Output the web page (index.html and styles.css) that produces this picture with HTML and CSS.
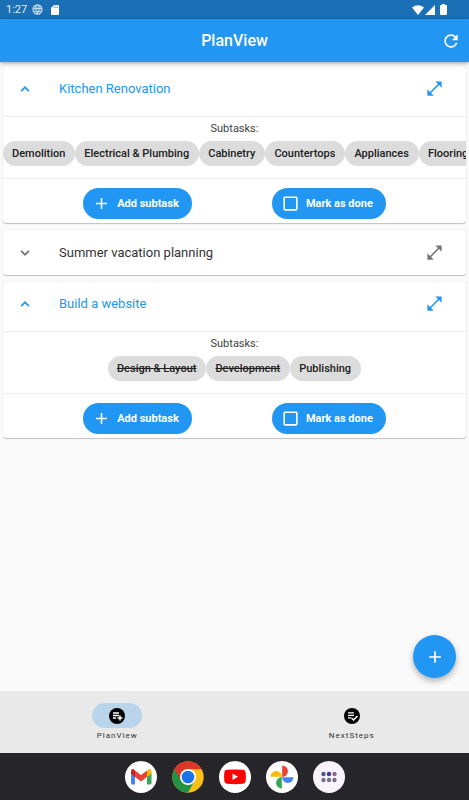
FILE: index.html
```html
<!DOCTYPE html>
<html lang="en">
<head>
<meta charset="utf-8">
<meta name="viewport" content="width=device-width, initial-scale=1">
<title>PlanView</title>
<link rel="stylesheet" href="styles.css">
</head>
<body>
<svg class="defs" aria-hidden="true">
  <symbol id="up" viewBox="0 0 24 24"><path d="M12 8l-6 6 1.600 1.600L12 11.200l4.400 4.400L18 14z"/></symbol>
  <symbol id="down" viewBox="0 0 24 24"><path d="M16.400 8.400L12 12.800 7.600 8.400 6 10l6 6 6-6z"/></symbol>
  <symbol id="expand" viewBox="0 0 24 24"><path d="M21 11V3h-8l3.290 3.290-10 10L3 13v8h8l-3.290-3.290 10-10z"/></symbol>
  <symbol id="plus" viewBox="0 0 24 24"><path d="M19 13h-6v6h-2v-6H5v-2h6V5h2v6h6z"/></symbol>
  <symbol id="box" viewBox="0 0 24 24"><path d="M19 5v14H5V5h14m0-2H5c-1.100 0-2 .9-2 2v14c0 1.100.9 2 2 2h14c1.100 0 2-.9 2-2V5c0-1.100-.9-2-2-2z"/></symbol>
</svg>
<div class="status">
  <span>1:27</span>
  <svg class="status-left" width="11" height="11" viewBox="0 0 11 11"><circle cx="5.500" cy="5.500" r="4.500" fill="#a5c8e5" fill-opacity=".35" stroke="#c3dbef" stroke-width="1.300"/><path d="M1 4.500h9M2.500 7.500h6M4 1.500v5M7 1.500v5M5.500 7v3" stroke="#c3dbef" stroke-width="1" fill="none"/></svg>
  <svg width="8" height="10" viewBox="0 0 8 10"><path fill="#fff" d="M3 0h4q1 0 1 1v8q0 1-1 1H1q-1 0-1-1V3z"/><path d="M3.500 1.500v1.500M5 1.500v1.500M6.500 1.500v1.500" stroke="#1a6fb5" stroke-width=".6"/></svg>
  <svg class="status-right" width="12" height="10" viewBox="0 0 12 10"><path fill="#fff" d="M0 2.500Q6-2 12 2.500L6 10z"/></svg>
  <svg class="signal" width="10" height="10" viewBox="0 0 10 10"><path fill="#fff" d="M10 0v10H0z"/></svg>
  <svg class="battery" width="7" height="11" viewBox="0 0 7 11"><path fill="#fff" d="M2 0h3v1h1q1 0 1 1v8q0 1-1 1H1q-1 0-1-1V2q0-1 1-1h1z"/></svg>
</div>
<header class="appbar">
  <h1>PlanView</h1>
  <button class="icon-btn refresh" aria-label="Refresh"><svg width="20" height="20" viewBox="0 0 24 24"><path d="M17.650 6.350C16.200 4.900 14.210 4 12 4c-4.420 0-7.990 3.580-7.990 8s3.570 8 7.990 8c3.730 0 6.840-2.550 7.730-6h-2.080c-.82 2.330-3.040 4-5.650 4-3.310 0-6-2.690-6-6s2.690-6 6-6c1.660 0 3.140.69 4.220 1.780L13 11h7V4z"/></svg></button>
</header>
<main>
  <section class="card open">
    <div class="head">
      <button class="icon-btn" aria-label="Collapse"><svg width="18" height="18"><use href="#up"/></svg></button>
      <h2>Kitchen Renovation</h2>
      <button class="icon-btn" aria-label="Expand"><svg width="19" height="19"><use href="#expand"/></svg></button>
    </div>
    <div class="body">
      <p>Subtasks:</p>
      <ul class="chips scroll"><li>Demolition</li><li>Electrical &amp; Plumbing</li><li>Cabinetry</li><li>Countertops</li><li>Appliances</li><li>Flooring</li></ul>
    </div>
    <div class="actions">
      <button class="pill"><svg width="19" height="19"><use href="#plus"/></svg>Add subtask</button>
      <button class="pill"><svg width="19" height="19"><use href="#box"/></svg>Mark as done</button>
    </div>
  </section>
  <section class="card">
    <div class="head">
      <button class="icon-btn" aria-label="Open"><svg width="18" height="18"><use href="#down"/></svg></button>
      <h2>Summer vacation planning</h2>
      <button class="icon-btn" aria-label="Expand"><svg width="19" height="19"><use href="#expand"/></svg></button>
    </div>
  </section>
  <section class="card open">
    <div class="head">
      <button class="icon-btn" aria-label="Collapse"><svg width="18" height="18"><use href="#up"/></svg></button>
      <h2>Build a website</h2>
      <button class="icon-btn" aria-label="Expand"><svg width="19" height="19"><use href="#expand"/></svg></button>
    </div>
    <div class="body">
      <p>Subtasks:</p>
      <ul class="chips"><li class="done">Design &amp; Layout</li><li class="done">Development</li><li>Publishing</li></ul>
    </div>
    <div class="actions">
      <button class="pill"><svg width="19" height="19"><use href="#plus"/></svg>Add subtask</button>
      <button class="pill"><svg width="19" height="19"><use href="#box"/></svg>Mark as done</button>
    </div>
  </section>
</main>
<div class="bottom">
  <button class="fab" aria-label="Add plan"><svg width="20" height="20"><use href="#plus"/></svg></button>
  <nav class="tabs">
    <a href="#plan" class="active"><span class="tab-icon"><svg width="16" height="16" viewBox="0 0 16 16"><circle cx="8" cy="8" r="8"/><path d="M4 5h6M4 7.500h6M4 10h3" stroke="#fff" stroke-width="1.300"/><path d="M11 7.500v5M8.500 10h5" stroke="#fff" stroke-width="1.500"/></svg></span>PlanView</a>
    <a href="#next"><span class="tab-icon"><svg width="16" height="16" viewBox="0 0 16 16"><circle cx="8" cy="8" r="8"/><path d="M4 4.800h6M4 7.300h6M4 9.800h3" stroke="#fff" stroke-width="1.300"/><path d="M7.500 10l2 2 4-4" stroke="#fff" stroke-width="1.500" fill="none"/></svg></span>NextSteps</a>
  </nav>
  <div class="dock">
    <a href="#gmail" aria-label="Gmail"><svg viewBox="0 0 32 32"><circle cx="16" cy="16" r="16" fill="#fff"/><path fill="#4285f4" d="M6 11l4 3v9.500H7.500Q6 23.500 6 22z"/><path fill="#34a853" d="M22 14l4.500-3v11q0 1.500-1.500 1.500h-3z"/><path fill="#fbbc04" d="M22 9.500Q26.500 6 26.500 11v1.500L22 16z"/><path fill="#c5221f" d="M6 12.500V11q0-5 4-1.500V16z"/><path fill="#ea4335" d="M10 9.500l6 4.500 6-4.500V16l-6 4.500L10 16z"/></svg></a>
    <a href="#chrome" aria-label="Chrome"><svg viewBox="0 0 32 32"><circle cx="16" cy="16" r="15.700" fill="#fbc116"/><path fill="#229342" d="M2.400 8.150A15.700 15.700 0 0 0 16 31.700L22.500 20 16 16z"/><path fill="#dc3529" d="M2.400 8.150A15.700 15.700 0 0 1 29.600 8.150H16v7.850L9.500 20z"/><circle cx="16" cy="16" r="8" fill="#fff"/><circle cx="16" cy="16" r="6.300" fill="#1a73e8"/></svg></a>
    <a href="#youtube" aria-label="YouTube"><svg viewBox="0 0 32 32"><circle cx="16" cy="16" r="16" fill="#fff"/><path fill="#f00" d="M8 8.800q8-.8 16 0 2.500.2 2.700 3 .4 4 0 8-.2 2.800-2.700 3-8 .8-16 0-2.500-.2-2.700-3-.4-4 0-8 .2-2.800 2.700-3z"/><path fill="#fff" d="M13.500 12.500v6.500l5.500-3.200z"/></svg></a>
    <a href="#photos" aria-label="Photos"><svg viewBox="0 0 32 32"><circle cx="16" cy="16" r="16" fill="#fff"/><path fill="#ea4335" d="M16.200 4.500a5.700 5.700 0 0 1 0 11.400z"/><path fill="#4285f4" d="M27.500 16.200a5.700 5.700 0 0 1-11.400 0z"/><path fill="#34a853" d="M15.800 27.500a5.700 5.700 0 0 1 0-11.400z"/><path fill="#fbbc04" d="M4.500 15.800a5.700 5.700 0 0 1 11.400 0z"/></svg></a>
    <a href="#apps" aria-label="All apps"><svg viewBox="0 0 32 32"><circle cx="16" cy="16" r="16" fill="#f8f3fc"/><g fill="#777089"><circle cx="10.500" cy="19" r="2.200"/><circle cx="16" cy="19" r="2.200"/><circle cx="21.500" cy="19" r="2.200"/></g><circle cx="10.500" cy="13" r="2.200" fill="#55549a"/><circle cx="16" cy="13" r="2.200" fill="#3d3b93"/><circle cx="21.500" cy="13" r="2.200" fill="#94688b"/></svg></a>
  </div>
</div>
</body>
</html>
```
FILE: styles.css
```css
* { box-sizing: border-box; }
body {
  margin: 0;
  min-height: 100vh;
  display: flex;
  flex-direction: column;
  background: #fafafa;
  color: #212121;
  font-family: Roboto, "Liberation Sans", sans-serif;
}
h1, h2, p, ul { margin: 0; padding: 0; }
button { font: inherit; border: 0; padding: 0; background: none; color: inherit; }
svg { display: block; fill: currentColor; flex: none; }
a { color: inherit; text-decoration: none; }
.defs { display: none; }

.status {
  height: 19px;
  display: flex;
  align-items: center;
  padding: 0 22px 0 6px;
  background: #1a6fb5;
  color: #e3eef7;
  font-size: 11px;
}
.status-left { margin: 0 8px 0 5px; }
.status-right { margin-left: auto; }
.signal { margin-left: 1px; }
.battery { margin-left: 5px; }

.appbar {
  position: relative;
  height: 43px;
  display: grid;
  grid-template-columns: 1fr auto 1fr;
  align-items: center;
  padding: 0 8px;
  background: #2196f3;
  color: #fff;
  box-shadow: 0 1px 4px rgba(0, 0, 0, .4);
}
.appbar h1 { grid-column: 2; font-size: 16px; font-weight: 500; line-height: 22px; }
.refresh { justify-self: end; }

main {
  flex: 1;
  display: flex;
  flex-direction: column;
  gap: 7px;
  padding: 5px 3px;
}
.card {
  border-radius: 3px;
  background: #fff;
  box-shadow: 0 1px 1px rgba(0, 0, 0, .22), 0 0 1px rgba(0, 0, 0, .18);
}
.head {
  display: flex;
  align-items: center;
  height: 45px;
  padding: 0 22px 0 13px;
  color: #757575;
}
.head h2 {
  flex: 1;
  margin-left: 25px;
  color: #333;
  font-size: 13px;
  font-weight: 400;
  line-height: 18px;
}
.open .head {
  height: 50px;
  padding-bottom: 6px;
  border-bottom: 1px solid #eee;
  color: #2196f3;
}
.open .head h2 { color: inherit; }
.body { padding: 4px 0 12px; }
.body p {
  margin-bottom: 4px;
  color: #424242;
  font-size: 11px;
  line-height: 16px;
  text-align: center;
}
.chips {
  display: flex;
  justify-content: center;
  overflow: hidden;
  list-style: none;
  font-size: 11px;
  font-weight: 500;
  line-height: 25px;
  white-space: nowrap;
}
.scroll { justify-content: flex-start; }
.chips li {
  flex: none;
  padding: 0 10px 0 9px;
  border-radius: 13px;
  background: #dcdcdc;
}
.done { text-decoration: line-through; }
.actions {
  display: flex;
  justify-content: space-evenly;
  padding: 9px 0 4px;
  border-top: 1px solid #eee;
}
.pill {
  display: flex;
  align-items: center;
  gap: 6px;
  height: 31px;
  padding: 0 13px 0 9px;
  border-radius: 16px;
  background: #2196f3;
  color: #fff;
  font-size: 11px;
  font-weight: 700;
}

.bottom { position: sticky; bottom: 0; }
.fab {
  position: absolute;
  right: 13px;
  bottom: calc(100% + 13px);
  display: grid;
  place-items: center;
  width: 43px;
  height: 43px;
  border-radius: 50%;
  background: #2196f3;
  color: #fff;
  box-shadow: 0 3px 6px rgba(0, 0, 0, .3);
}
.tabs {
  display: grid;
  grid-template-columns: 1fr 1fr;
  height: 62px;
  padding-top: 12px;
  background: #e9e9e9;
}
.tabs a {
  display: flex;
  flex-direction: column;
  align-items: center;
  gap: 2px;
  color: #333;
  font-size: 8px;
  line-height: 12px;
  letter-spacing: 1px;
}
.tab-icon {
  display: grid;
  place-items: center;
  width: 50px;
  height: 25px;
  border-radius: 13px;
  color: #000;
}
.active .tab-icon { background: #b9d5ec; }
.dock {
  display: flex;
  justify-content: center;
  align-items: center;
  gap: 15px;
  height: 47px;
  background: #25252a;
}
.dock svg { width: 32px; height: 32px; }
```
